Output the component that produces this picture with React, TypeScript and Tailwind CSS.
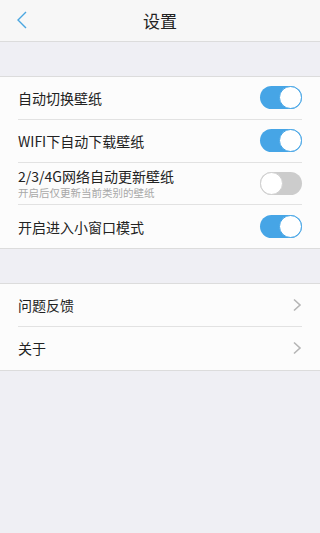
import React from "react";

const font = { fontFamily: '"Noto Sans CJK SC", "Noto Sans", sans-serif' };

function Toggle({ on }: { on: boolean }) {
  return (
    <div
      className={`relative w-[42px] h-[23px] rounded-full shrink-0 ${on ? "bg-[#46a5e6]" : "bg-[#cccccc]"}`}
    >
      <div
        className={`absolute top-0 w-[23px] h-[23px] rounded-full bg-white border ${on ? "right-0 border-[#46a5e6]" : "left-0 border-[#cfcfcf]"}`}
      />
    </div>
  );
}

function Chevron() {
  return (
    <svg width="10" height="14" viewBox="0 0 10 14" className="shrink-0">
      <path d="M2 1.5 L8 7 L2 12.5" fill="none" stroke="#b5b5b5" strokeWidth="1.6" />
    </svg>
  );
}

function Row({
  title,
  sub,
  right,
  last,
}: {
  title: string;
  sub?: string;
  right: React.ReactNode;
  last?: boolean;
}) {
  return (
    <div className="pl-[18px] pr-[18px] bg-[#fcfcfc]">
      <div
        className={`h-[42.75px] flex items-center justify-between ${last ? "" : "border-b border-[#e2e2e2]"}`}
      >
        <div className="flex flex-col">
          <span className="text-[14px] leading-[16px] text-[#222]">{title}</span>
          {sub && <span className="text-[10.5px] leading-[11px] mt-[3px] text-[#a8a8a8]">{sub}</span>}
        </div>
        {right}
      </div>
    </div>
  );
}

export default function App() {
  return (
    <div className="w-[320px] h-[533px] bg-[#efeff4] flex flex-col" style={font}>
      <div className="h-[42px] bg-[#f7f7f7] border-b border-[#dcdcdc] relative flex items-center justify-center shrink-0">
        <svg width="12" height="18" viewBox="0 0 12 18" className="absolute left-[16px] top-[11px]">
          <path d="M10 1 L2 9 L10 17" fill="none" stroke="#4aa6e0" strokeWidth="1.4" />
        </svg>
        <span className="text-[17px] text-[#222]">设置</span>
      </div>
      <div className="h-[34px] shrink-0" />
      <div className="border-y border-[#dcdcdc]">
        <Row title="自动切换壁纸" right={<Toggle on />} />
        <Row title="WIFI下自动下载壁纸" right={<Toggle on />} />
        <Row title="2/3/4G网络自动更新壁纸" sub="开启后仅更新当前类别的壁纸" right={<Toggle on={false} />} />
        <Row title="开启进入小窗口模式" right={<Toggle on />} last />
      </div>
      <div className="h-[34px] shrink-0" />
      <div className="border-y border-[#dcdcdc]">
        <Row title="问题反馈" right={<Chevron />} />
        <Row title="关于" right={<Chevron />} last />
      </div>
    </div>
  );
}
